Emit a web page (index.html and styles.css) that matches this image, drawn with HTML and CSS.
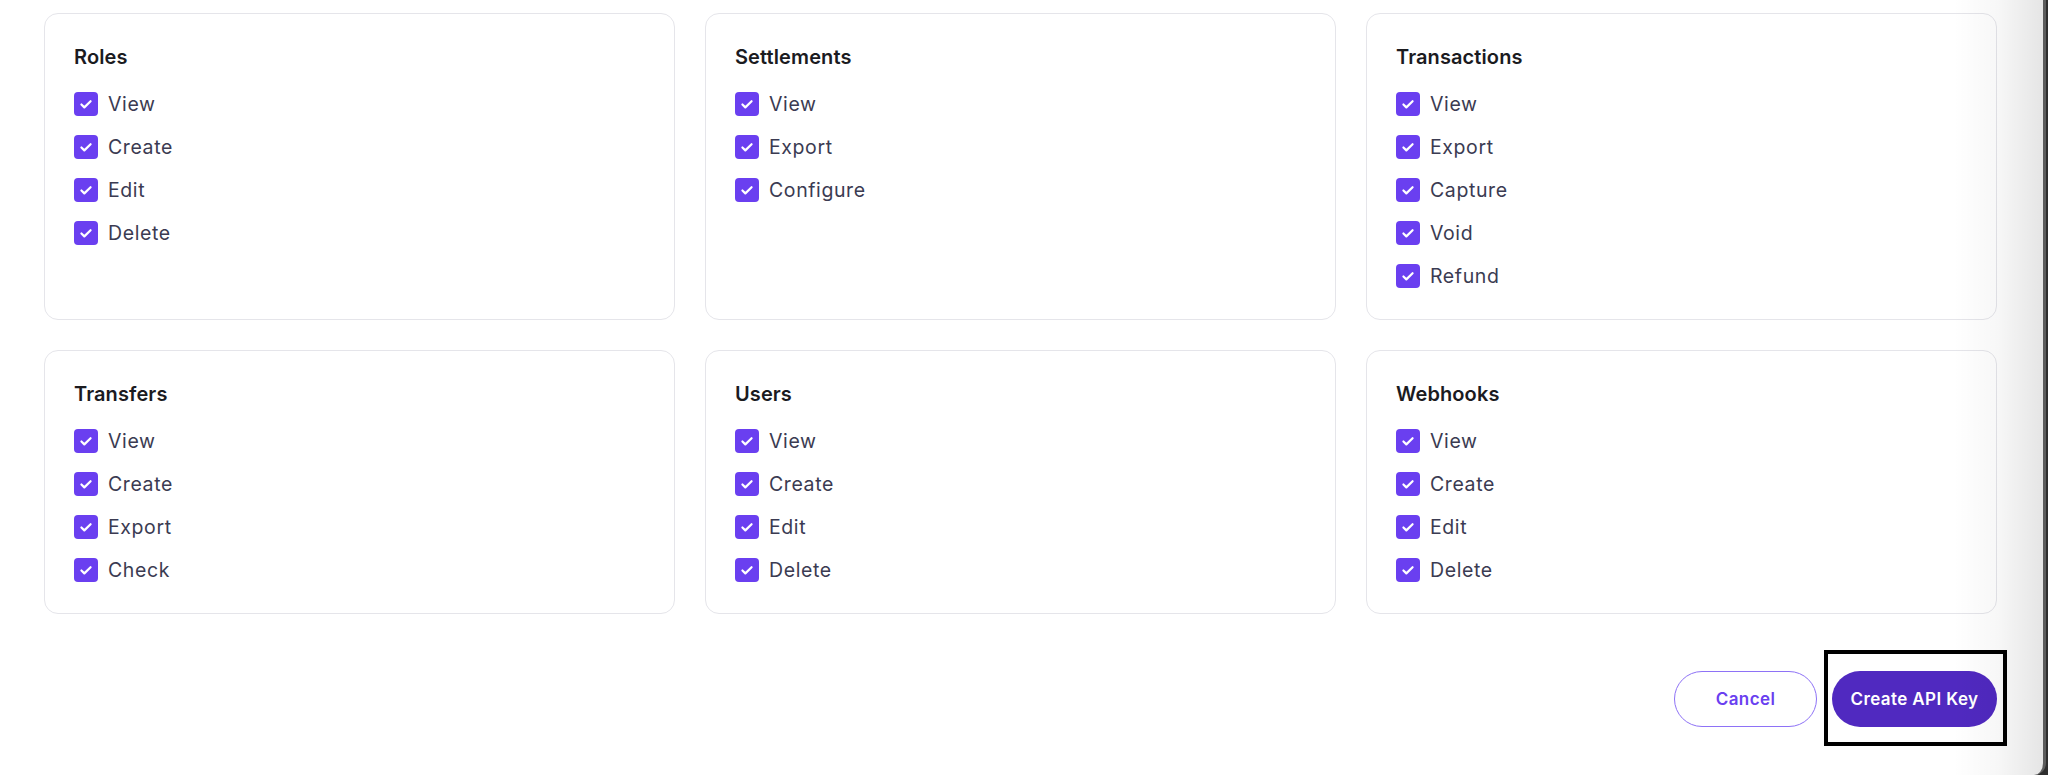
FILE: index.html
```html
<!DOCTYPE html>
<html lang="en">
<head>
<meta charset="utf-8">
<title>Create API Key</title>
<link rel="stylesheet" href="styles.css">
</head>
<body>
<div class="panel">
  <div class="grid">
    <section class="card">
      <h3 class="card-title">Roles</h3>
      <ul class="perms">
        <li class="perm"><span class="box"><svg viewBox="0 0 24 24"><path d="M7 12.5l3.2 3.2L17 9"/></svg></span>View</li>
        <li class="perm"><span class="box"><svg viewBox="0 0 24 24"><path d="M7 12.5l3.2 3.2L17 9"/></svg></span>Create</li>
        <li class="perm"><span class="box"><svg viewBox="0 0 24 24"><path d="M7 12.5l3.2 3.2L17 9"/></svg></span>Edit</li>
        <li class="perm"><span class="box"><svg viewBox="0 0 24 24"><path d="M7 12.5l3.2 3.2L17 9"/></svg></span>Delete</li>
      </ul>
    </section>
    <section class="card">
      <h3 class="card-title">Settlements</h3>
      <ul class="perms">
        <li class="perm"><span class="box"><svg viewBox="0 0 24 24"><path d="M7 12.5l3.2 3.2L17 9"/></svg></span>View</li>
        <li class="perm"><span class="box"><svg viewBox="0 0 24 24"><path d="M7 12.5l3.2 3.2L17 9"/></svg></span>Export</li>
        <li class="perm"><span class="box"><svg viewBox="0 0 24 24"><path d="M7 12.5l3.2 3.2L17 9"/></svg></span>Configure</li>
      </ul>
    </section>
    <section class="card">
      <h3 class="card-title">Transactions</h3>
      <ul class="perms">
        <li class="perm"><span class="box"><svg viewBox="0 0 24 24"><path d="M7 12.5l3.2 3.2L17 9"/></svg></span>View</li>
        <li class="perm"><span class="box"><svg viewBox="0 0 24 24"><path d="M7 12.5l3.2 3.2L17 9"/></svg></span>Export</li>
        <li class="perm"><span class="box"><svg viewBox="0 0 24 24"><path d="M7 12.5l3.2 3.2L17 9"/></svg></span>Capture</li>
        <li class="perm"><span class="box"><svg viewBox="0 0 24 24"><path d="M7 12.5l3.2 3.2L17 9"/></svg></span>Void</li>
        <li class="perm"><span class="box"><svg viewBox="0 0 24 24"><path d="M7 12.5l3.2 3.2L17 9"/></svg></span>Refund</li>
      </ul>
    </section>
    <section class="card">
      <h3 class="card-title">Transfers</h3>
      <ul class="perms">
        <li class="perm"><span class="box"><svg viewBox="0 0 24 24"><path d="M7 12.5l3.2 3.2L17 9"/></svg></span>View</li>
        <li class="perm"><span class="box"><svg viewBox="0 0 24 24"><path d="M7 12.5l3.2 3.2L17 9"/></svg></span>Create</li>
        <li class="perm"><span class="box"><svg viewBox="0 0 24 24"><path d="M7 12.5l3.2 3.2L17 9"/></svg></span>Export</li>
        <li class="perm"><span class="box"><svg viewBox="0 0 24 24"><path d="M7 12.5l3.2 3.2L17 9"/></svg></span>Check</li>
      </ul>
    </section>
    <section class="card">
      <h3 class="card-title">Users</h3>
      <ul class="perms">
        <li class="perm"><span class="box"><svg viewBox="0 0 24 24"><path d="M7 12.5l3.2 3.2L17 9"/></svg></span>View</li>
        <li class="perm"><span class="box"><svg viewBox="0 0 24 24"><path d="M7 12.5l3.2 3.2L17 9"/></svg></span>Create</li>
        <li class="perm"><span class="box"><svg viewBox="0 0 24 24"><path d="M7 12.5l3.2 3.2L17 9"/></svg></span>Edit</li>
        <li class="perm"><span class="box"><svg viewBox="0 0 24 24"><path d="M7 12.5l3.2 3.2L17 9"/></svg></span>Delete</li>
      </ul>
    </section>
    <section class="card">
      <h3 class="card-title">Webhooks</h3>
      <ul class="perms">
        <li class="perm"><span class="box"><svg viewBox="0 0 24 24"><path d="M7 12.5l3.2 3.2L17 9"/></svg></span>View</li>
        <li class="perm"><span class="box"><svg viewBox="0 0 24 24"><path d="M7 12.5l3.2 3.2L17 9"/></svg></span>Create</li>
        <li class="perm"><span class="box"><svg viewBox="0 0 24 24"><path d="M7 12.5l3.2 3.2L17 9"/></svg></span>Edit</li>
        <li class="perm"><span class="box"><svg viewBox="0 0 24 24"><path d="M7 12.5l3.2 3.2L17 9"/></svg></span>Delete</li>
      </ul>
    </section>
  </div>
  <div class="footer">
    <button class="btn btn-outline">Cancel</button>
    <button class="btn btn-primary">Create API Key<span class="highlight"></span></button>
  </div>
</div>
</body>
</html>
```
FILE: styles.css
```css
* { box-sizing: border-box; }
html, body {
  margin: 0;
  padding: 0;
  width: 2048px;
  height: 775px;
  overflow: hidden;
  background: #2e2e2e;
  font-family: Inter, "Liberation Sans", sans-serif;
}
.panel {
  position: relative;
  width: 2046px;
  height: 775px;
  background: #ffffff;
  border-right: 3px solid #5c5c5c;
  border-bottom-right-radius: 12px;
  padding: 13px 46px 0 44px;
  overflow: hidden;
}
.panel::after {
  content: "";
  position: absolute;
  top: 0;
  right: 0;
  bottom: 0;
  width: 90px;
  background: linear-gradient(to right, rgba(0,0,0,0) 0%, rgba(0,0,0,0.03) 50%, rgba(0,0,0,0.10) 100%);
  pointer-events: none;
}
.grid {
  display: grid;
  grid-template-columns: repeat(3, 1fr);
  column-gap: 30px;
  row-gap: 30px;
}
.card {
  border: 1px solid #e5e5ea;
  border-radius: 14px;
  padding: 29px 29px 31px 29px;
}
.card-title {
  margin: 0 0 21px 0;
  font-size: 20px;
  line-height: 28px;
  font-weight: 600;
  letter-spacing: 0.1px;
  color: #1b1b1f;
}
.perms {
  list-style: none;
  margin: 0;
  padding: 0;
  display: flex;
  flex-direction: column;
  gap: 19px;
}
.perm {
  display: flex;
  align-items: center;
  gap: 10px;
  height: 24px;
  font-size: 19.5px;
  line-height: 24px;
  letter-spacing: 0.6px;
  color: #3b3b52;
}
.box {
  width: 24px;
  height: 24px;
  border-radius: 4px;
  background: #6a3ff0;
  display: flex;
  align-items: center;
  justify-content: center;
  flex: none;
}
.box svg {
  width: 22px;
  height: 22px;
  fill: none;
  stroke: #ffffff;
  stroke-width: 2.4;
  stroke-linecap: round;
  stroke-linejoin: round;
}
.footer {
  display: flex;
  justify-content: flex-end;
  gap: 15px;
  margin-top: 57px;
}
.btn {
  height: 56px;
  border-radius: 28px;
  font-family: Inter, "Liberation Sans", sans-serif;
  font-size: 17px;
  font-weight: 600;
  letter-spacing: 0.4px;
  cursor: pointer;
}
.btn-outline {
  width: 143px;
  background: #ffffff;
  border: 1.5px solid #8e72f6;
  color: #6a3ff0;
}
.btn-primary {
  position: relative;
  width: 165px;
  background: #5029c0;
  border: none;
  color: #ffffff;
}
.highlight {
  position: absolute;
  left: -8px;
  right: -10px;
  top: -21px;
  bottom: -19px;
  border: 4px solid #000000;
  pointer-events: none;
}
```
